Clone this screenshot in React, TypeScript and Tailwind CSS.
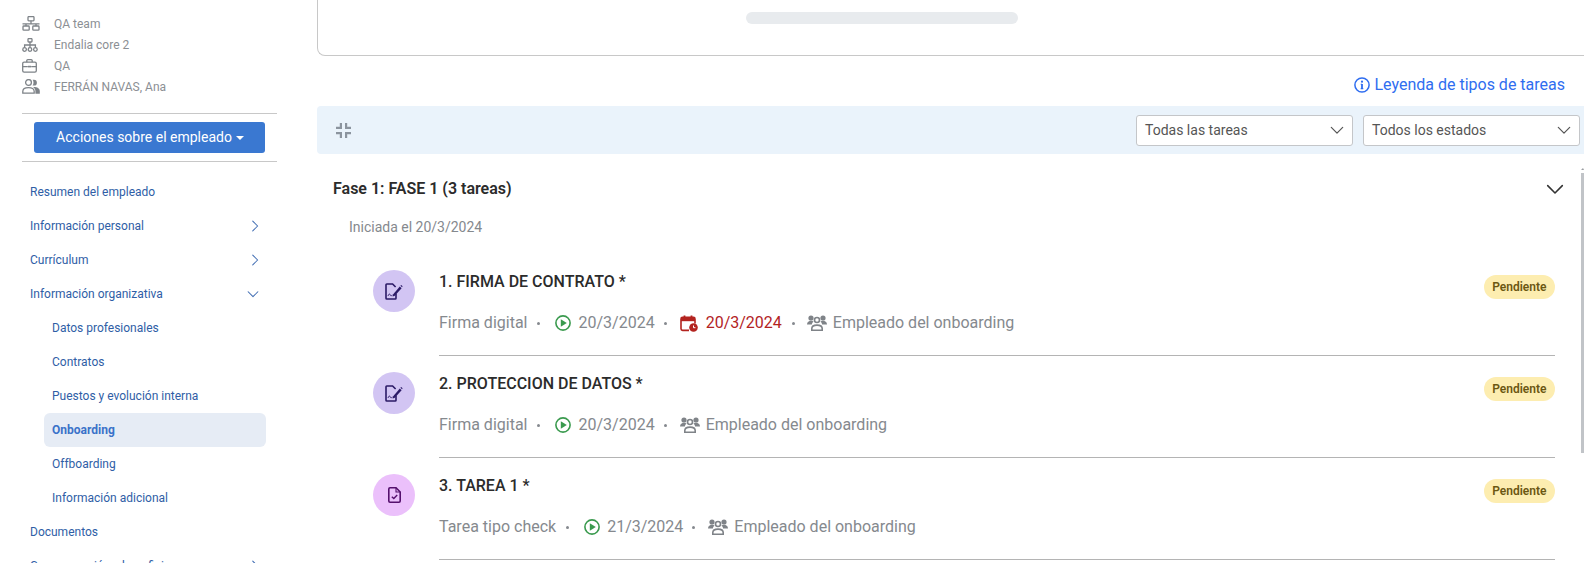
import React from "react";

const font = { fontFamily: "Roboto, 'Noto Sans', sans-serif" };

function Chevron({ dir = "down", className = "" }: { dir?: "down" | "right"; className?: string }) {
  return (
    <svg viewBox="0 0 16 16" className={className} fill="none" stroke="currentColor" strokeWidth="1.4" strokeLinecap="round" strokeLinejoin="round">
      {dir === "down" ? <polyline points="1.5,5 8,11.5 14.5,5" /> : <polyline points="5,1.5 11.5,8 5,14.5" />}
    </svg>
  );
}

function TeamIcon() {
  return (
    <svg viewBox="0 0 18 15" className="w-[18px] h-[15px]" fill="none" stroke="currentColor" strokeWidth="1.3">
      <rect x="6" y="0.6" width="6" height="4.2" rx="0.8" />
      <path d="M9 4.8V7.8M0.5 7.8H17.5M4 7.8V10M14 7.8V10" />
      <rect x="1" y="10" width="6.2" height="4.2" rx="0.8" />
      <rect x="10.8" y="10" width="6.2" height="4.2" rx="0.8" />
    </svg>
  );
}

function CoreIcon() {
  return (
    <svg viewBox="0 0 16 14" className="w-[16px] h-[14px]" fill="none" stroke="currentColor" strokeWidth="1.3">
      <rect x="6" y="0.6" width="4" height="3.4" rx="0.7" />
      <path d="M8 4V9.5M2.6 9.5V7H13.4V9.5" />
      <circle cx="2.6" cy="11.5" r="1.8" />
      <circle cx="8" cy="11.5" r="1.8" />
      <circle cx="13.4" cy="11.5" r="1.8" />
    </svg>
  );
}

function CaseIcon() {
  return (
    <svg viewBox="0 0 15 14" className="w-[15px] h-[14px]" fill="none" stroke="currentColor" strokeWidth="1.3">
      <rect x="0.7" y="3.2" width="13.6" height="10" rx="1.4" />
      <path d="M4.8 3.2V1.6C4.8 1 5.2 0.7 5.8 0.7H9.2C9.8 0.7 10.2 1 10.2 1.6V3.2M0.7 7.6H5.8M9.2 7.6H14.3" />
      <rect x="6" y="6.8" width="3" height="1.6" fill="currentColor" stroke="none" />
    </svg>
  );
}

function PersonIcon() {
  return (
    <svg viewBox="0 0 18 15" className="w-[18px] h-[15px]">
      <circle cx="6.5" cy="3.5" r="2.9" fill="none" stroke="currentColor" strokeWidth="1.3" />
      <path d="M0.8 14.2V12.4C0.8 9.9 3 8.6 6.5 8.6S12.2 9.9 12.2 12.4V14.2Z" fill="none" stroke="currentColor" strokeWidth="1.3" />
      <path d="M10.6 0.8H12A2.9 2.9 0 0 1 12 6.6H10.6C11.8 5 11.8 2.4 10.6 0.8Z" fill="currentColor" />
      <path d="M11 8C15 7.8 17.8 9.4 17.8 12V14.8H13.4V12C13.4 10.4 12.4 9 11 8Z" fill="currentColor" />
    </svg>
  );
}

function CompressIcon() {
  return (
    <svg viewBox="0 0 17 17" className="w-[17px] h-[17px] text-[#8b949e]" fill="none" stroke="currentColor" strokeWidth="2.2">
      <path d="M1 5.9H5.9V1M11.1 1V5.9H16M1 11.1H5.9V16M11.1 16V11.1H16" />
    </svg>
  );
}

function InfoIcon() {
  return (
    <svg viewBox="0 0 16 16" className="w-[16px] h-[16px]" fill="none" stroke="currentColor">
      <circle cx="8" cy="8" r="7.1" strokeWidth="1.5" />
      <path d="M8 7V11.6" strokeWidth="1.8" />
      <path d="M6.7 7.2H8M6.7 11.6H9.3" strokeWidth="1.1" />
      <circle cx="8" cy="4.7" r="1.1" fill="currentColor" stroke="none" />
    </svg>
  );
}

function PlayIcon() {
  return (
    <svg viewBox="0 0 16 16" className="w-[16px] h-[16px] shrink-0">
      <circle cx="8" cy="8" r="7.1" fill="none" stroke="#3a9a4e" strokeWidth="1.6" />
      <path d="M5.8 4.2L11.8 8L5.8 11.8Z" fill="#3a9a4e" />
    </svg>
  );
}

function CalendarIcon() {
  return (
    <svg viewBox="0 0 18 17" className="w-[18px] h-[17px] shrink-0">
      <path d="M9 15.4H2.6C1.7 15.4 1 14.7 1 13.8V4C1 3.1 1.7 2.4 2.6 2.4H13.4C14.3 2.4 15 3.1 15 4V8.4" fill="none" stroke="#b3231f" strokeWidth="1.6" />
      <path d="M1 3H15V6.2H1Z" fill="#b3231f" />
      <path d="M4.5 0.6V3M11.5 0.6V3" stroke="#b3231f" strokeWidth="1.8" />
      <circle cx="13.5" cy="12.5" r="4.3" fill="#b3231f" />
      <path d="M13.5 10.5V12.7H15.4" fill="none" stroke="#fff" strokeWidth="1" />
    </svg>
  );
}

function UsersIcon() {
  return (
    <svg viewBox="0 0 20 16" className="w-[20px] h-[16px] shrink-0 text-[#7f8388]">
      <circle cx="4" cy="3" r="2.6" fill="currentColor" />
      <circle cx="16" cy="3" r="2.6" fill="currentColor" />
      <path d="M0 9.6C0 7 2 5.8 4 5.8C5 5.8 5.9 6 6.6 6.6C5.6 7.4 5 8.4 4.9 9.6Z" fill="currentColor" />
      <path d="M20 9.6C20 7 18 5.8 16 5.8C15 5.8 14.1 6 13.4 6.6C14.4 7.4 15 8.4 15.1 9.6Z" fill="currentColor" />
      <circle cx="10" cy="5" r="2.5" fill="none" stroke="currentColor" strokeWidth="1.6" />
      <path d="M4.8 15.2V13.6C4.8 11.4 7 10.1 10 10.1S15.2 11.4 15.2 13.6V15.2Z" fill="none" stroke="currentColor" strokeWidth="1.6" />
    </svg>
  );
}

function SignIcon() {
  return (
    <svg viewBox="0 0 18 17" className="w-[18px] h-[17px]" fill="none" stroke="#2b1a66">
      <path d="M11 10.5V15.2C11 15.7 10.6 16 10.2 16H1.8C1.3 16 1 15.7 1 15.2V1.8C1 1.3 1.3 1 1.8 1H7.6L10.6 4" strokeWidth="1.6" />
      <path d="M3 13C4 10.6 4.8 10.4 5.4 12.2C5.9 13.4 6.6 12.4 7.4 12.2" strokeWidth="0.9" />
      <path d="M8 11.4L14.8 3.6L16.6 5.2L9.8 12.8L7.6 13.4Z" fill="#2b1a66" stroke="none" />
      <path d="M15.4 2.8L16.2 2L17.6 3.2L17 4.2Z" fill="#2b1a66" stroke="none" />
    </svg>
  );
}

function CheckDocIcon() {
  return (
    <svg viewBox="0 0 13 16" className="w-[13px] h-[16px]" fill="none" stroke="#55106d">
      <path d="M8 0.8H2C1.3 0.8 0.8 1.3 0.8 2V14C0.8 14.7 1.3 15.2 2 15.2H11C11.7 15.2 12.2 14.7 12.2 14V5L8 0.8Z" strokeWidth="1.6" />
      <path d="M8 0.8V5H12.2" strokeWidth="1.1" />
      <path d="M3.8 9.8L5.8 11.6L9.2 8" strokeWidth="1.4" />
    </svg>
  );
}

function Dot({ className }: { className: string }) {
  return <span className={`w-[3px] h-[3px] rounded-full bg-[#85898e] ${className}`} />;
}

function Info({ icon, text }: { icon: React.ReactNode; text: string }) {
  return (
    <div className="flex items-center h-[21px] text-[12px] text-[#8b8f94]">
      <span className="w-[32px] flex items-center text-[#7e8388]">{icon}</span>
      <span>{text}</span>
    </div>
  );
}

function NavItem({ label, sub, active, chevron }: { label: string; sub?: boolean; active?: boolean; chevron?: "right" | "down" }) {
  return (
    <div className={`relative flex items-center h-[34px] text-[12px] ${sub ? "pl-[30px]" : "pl-[8px]"} pr-[12px] text-[#2f5ea6]`}>
      {active && <div className="absolute left-[22px] right-[11px] top-0 bottom-0 rounded-[6px] bg-[#e6ecf5]" />}
      <span className={`relative flex-1 ${active ? "font-bold text-[#3a72c9]" : ""}`}>{label}</span>
      {chevron === "right" && <Chevron dir="right" className="w-[12px] h-[12px] text-[#3f6cb2] mr-[4px]" />}
      {chevron === "down" && <Chevron dir="down" className="w-[12px] h-[12px] text-[#3f6cb2] mr-[6px]" />}
    </div>
  );
}

function Task({ bg, icon, title, children }: { bg: string; icon: React.ReactNode; title: string; children: React.ReactNode }) {
  return (
    <div className="flex gap-[24px]">
      <div className="pt-[16px]">
        <div className={`w-[42px] h-[42px] rounded-full flex items-center justify-center ${bg}`}>{icon}</div>
      </div>
      <div className="flex-1 border-b border-[#b4b4b4] pt-[16px] pb-[20px]">
        <div className="flex justify-between items-start">
          <span className="text-[16px] leading-[24px] font-medium text-[#2b2b2b]">{title}</span>
          <span className="mt-[5px] h-[24px] px-[8.5px] rounded-full bg-[#fdedb0] text-[12px] font-semibold text-[#6b5712] flex items-center">Pendiente</span>
        </div>
        <div className="mt-[12px] h-[24px] flex items-center text-[16px] text-[#85898e]">{children}</div>
      </div>
    </div>
  );
}

function Select({ label }: { label: string }) {
  return (
    <div className="w-[217px] h-[31px] bg-white border border-[#c4c6c9] rounded-[3px] flex items-center justify-between pl-[8px] pr-[8px] text-[14px] text-[#555]">
      <span>{label}</span>
      <Chevron dir="down" className="w-[14px] h-[14px] text-[#555]" />
    </div>
  );
}

export default function App() {
  return (
    <div style={font} className="relative flex w-[1584px] h-[563px] overflow-hidden bg-white">
      <aside className="w-[317px] shrink-0 pl-[22px] pr-[40px] pt-[13px]">
        <Info icon={<TeamIcon />} text="QA team" />
        <Info icon={<CoreIcon />} text="Endalia core 2" />
        <Info icon={<CaseIcon />} text="QA" />
        <Info icon={<PersonIcon />} text="FERRÁN NAVAS, Ana" />
        <div className="mt-[16px] border-t border-[#c8c8c8]" />
        <div className="mt-[8px] mx-[12px] h-[31px] rounded-[3px] bg-[#3a78d1] text-white text-[14px] flex items-center justify-center gap-[4px] w-[231px] pl-[1px]">
          <span>Acciones sobre el empleado</span>
          <span className="w-0 h-0 border-l-[4px] border-r-[4px] border-t-[4px] border-l-transparent border-r-transparent border-t-white" />
        </div>
        <div className="mt-[8px] border-t border-[#c8c8c8]" />
        <nav className="mt-[13px]">
          <NavItem label="Resumen del empleado" />
          <NavItem label="Información personal" chevron="right" />
          <NavItem label="Currículum" chevron="right" />
          <NavItem label="Información organizativa" chevron="down" />
          <NavItem label="Datos profesionales" sub />
          <NavItem label="Contratos" sub />
          <NavItem label="Puestos y evolución interna" sub />
          <NavItem label="Onboarding" sub active />
          <NavItem label="Offboarding" sub />
          <NavItem label="Información adicional" sub />
          <NavItem label="Documentos" />
          <NavItem label="Compensación y beneficios" chevron="right" />
        </nav>
      </aside>

      <main className="flex-1 min-w-0">
        <div className="h-[56px] border-l border-b border-[#c8c8c8] rounded-bl-[8px] pt-[12px] pl-[428px]">
          <div className="w-[272px] h-[12px] rounded-full bg-[#e8ebee]" />
        </div>
        <div className="h-[50px] pt-[17px] pr-[19px] flex justify-end">
          <div className="h-[24px] flex items-center gap-[4px] text-[16px] text-[#2f6df0]">
            <InfoIcon />
            <span>Leyenda de tipos de tareas</span>
          </div>
        </div>
        <div className="h-[48px] rounded-l-[4px] bg-[#eaf3fb] flex items-center justify-between pl-[18px] pr-[4px]">
          <CompressIcon />
          <div className="flex gap-[10px]">
            <Select label="Todas las tareas" />
            <Select label="Todos los estados" />
          </div>
        </div>
        <div className="h-[70px] flex items-center justify-between pl-[16px] pr-[20px]">
          <span className="text-[16px] font-semibold text-[#2b2b2b]">Fase 1: FASE 1 (3 tareas)</span>
          <Chevron dir="down" className="w-[18px] h-[18px] text-[#333]" />
        </div>
        <div className="h-[30px] pl-[32px] -mt-[12px] flex items-center text-[14px] text-[#85898e]">Iniciada el 20/3/2024</div>
        <div className="mt-[12px] pl-[56px] pr-[29px]">
          <Task bg="bg-[#d2c5f3]" icon={<SignIcon />} title="1. FIRMA DE CONTRATO *">
            <span>Firma digital</span>
            <Dot className="ml-[10px] mr-[15px]" />
            <PlayIcon />
            <span className="ml-[7px]">20/3/2024</span>
            <Dot className="ml-[9px] mr-[13px]" />
            <CalendarIcon />
            <span className="ml-[8px] text-[#b3231f]">20/3/2024</span>
            <Dot className="ml-[10px] mr-[12px]" />
            <UsersIcon />
            <span className="ml-[6px]">Empleado del onboarding</span>
          </Task>
          <Task bg="bg-[#d2c5f3]" icon={<SignIcon />} title="2. PROTECCION DE DATOS *">
            <span>Firma digital</span>
            <Dot className="ml-[10px] mr-[15px]" />
            <PlayIcon />
            <span className="ml-[7px]">20/3/2024</span>
            <Dot className="ml-[9px] mr-[13px]" />
            <UsersIcon />
            <span className="ml-[6px]">Empleado del onboarding</span>
          </Task>
          <Task bg="bg-[#ebc0fb]" icon={<CheckDocIcon />} title="3. TAREA 1 *">
            <span>Tarea tipo check</span>
            <Dot className="ml-[10px] mr-[15px]" />
            <PlayIcon />
            <span className="ml-[7px]">21/3/2024</span>
            <Dot className="ml-[9px] mr-[13px]" />
            <UsersIcon />
            <span className="ml-[6px]">Empleado del onboarding</span>
          </Task>
        </div>
      </main>
      <div className="absolute left-[1581px] top-[173px] w-[3px] h-[280px] bg-[#c1c4c8]" />
      <div className="absolute left-[1581px] top-[168px] w-0 h-0 border-l-[2px] border-r-[1px] border-b-[2px] border-l-transparent border-r-transparent border-b-[#9a9da1]" />
    </div>
  );
}
